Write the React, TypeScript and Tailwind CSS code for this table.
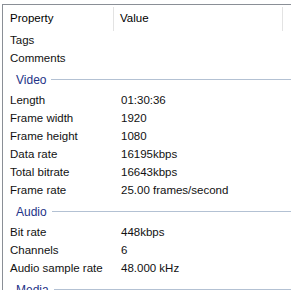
const font = { fontFamily: '"Liberation Sans", Arial, sans-serif' };

type Row = { label: string; value?: string };

const top: Row[] = [{ label: 'Tags' }, { label: 'Comments' }];

const video: Row[] = [
  { label: 'Length', value: '01:30:36' },
  { label: 'Frame width', value: '1920' },
  { label: 'Frame height', value: '1080' },
  { label: 'Data rate', value: '16195kbps' },
  { label: 'Total bitrate', value: '16643kbps' },
  { label: 'Frame rate', value: '25.00 frames/second' },
];

const audio: Row[] = [
  { label: 'Bit rate', value: '448kbps' },
  { label: 'Channels', value: '6' },
  { label: 'Audio sample rate', value: '48.000 kHz' },
];

function PropRow({ label, value }: Row) {
  return (
    <div className="flex h-[18px] items-center text-[11.5px] text-[#111]">
      <div className="w-[111px] shrink-0 pl-[7px] whitespace-nowrap">{label}</div>
      <div className="pl-[7px] whitespace-nowrap">{value}</div>
    </div>
  );
}

function Group({ title }: { title: string }) {
  return (
    <div className="flex h-[24px] items-center pl-[13px] pb-[1px]">
      <span className="text-[12px] text-[#1e3287]">{title}</span>
      <div className="ml-[5px] h-px flex-1 bg-[#b3c1d3]" />
    </div>
  );
}

export default function App() {
  return (
    <div className="h-[290px] w-[291px] overflow-hidden bg-white" style={font}>
      <div className="ml-[2px] mt-[4px] h-[300px] border-l border-t border-[#8a8f96]">
        {/* Column header */}
        <div className="flex h-[27px] items-center text-[11.5px] text-black">
          <div className="w-[110px] shrink-0 pl-[7px]">Property</div>
          <div className="h-[24px] w-px bg-[#e3e3e3]" />
          <div className="w-[168px] shrink-0 pl-[6px]">Value</div>
          <div className="h-[24px] w-px bg-[#e3e3e3]" />
        </div>

        {top.map((r) => (
          <PropRow key={r.label} {...r} />
        ))}
        <Group title="Video" />
        {video.map((r) => (
          <PropRow key={r.label} {...r} />
        ))}
        <Group title="Audio" />
        {audio.map((r) => (
          <PropRow key={r.label} {...r} />
        ))}
        <Group title="Media" />
      </div>
    </div>
  );
}
